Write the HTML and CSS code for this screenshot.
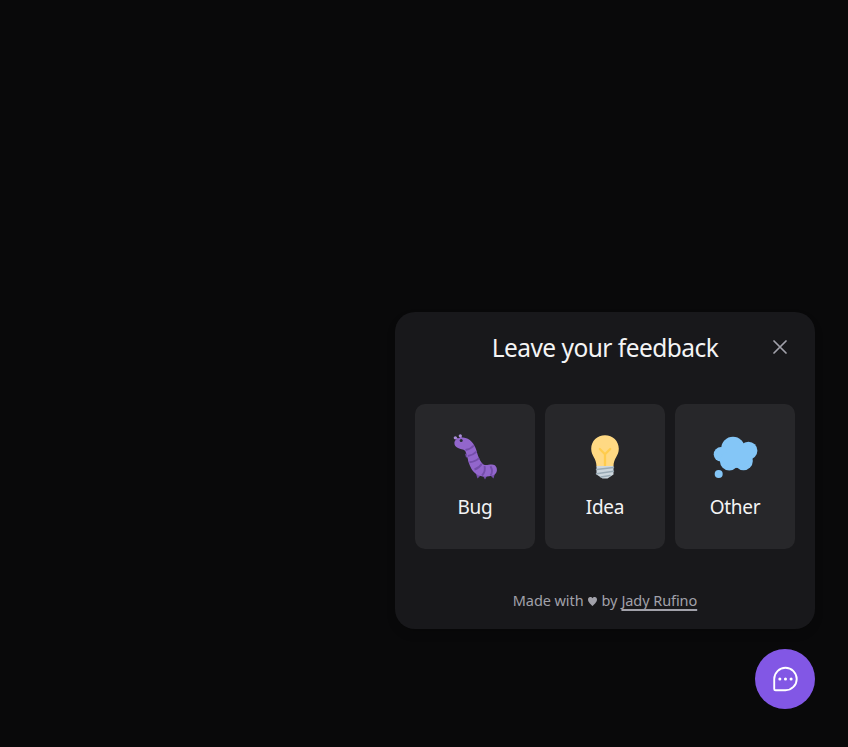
FILE: index.html
```
<!DOCTYPE html>
<html lang="en">
<head>
<meta charset="utf-8">
<title>Feedback</title>
<link rel="stylesheet" href="styles.css">
</head>
<body>
<div class="widget">
  <section class="panel">
    <header class="panel-header">
      <h1 class="title">Leave your feedback</h1>
      <button class="close" aria-label="Close">
        <svg width="14" height="14" viewBox="0 0 14 14" fill="none" stroke="currentColor" stroke-width="1.7" stroke-linecap="round"><path d="M1 1l12 12M13 1L1 13"/></svg>
      </button>
    </header>
    <div class="options">
      <button class="option">
        <svg class="icon" viewBox="0 0 60 60">
          <g fill="#744eaa"><path d="M20 28.500l1 4 4-1zM23 34.500l1 4 4-2zM31 49l1.500 4.500 3-3zM37.500 50l2.500 4.500 2.500-4.500zM45 50l3.500 3.500 1.500-5z"/></g>
          <path d="M10.500 12.500l4 3M15 10l1.500 4" stroke="#9266cc" stroke-width="1.500"/>
          <path d="M9.400 17.500C9.800 14 14 12.200 18 12.400C25 12.700 29.500 19 31.300 25C33 31.500 35.500 37.500 38.500 39.500C41 40.800 43 39.500 47 39.500C50.500 39.500 52.200 42.500 51.900 45.500C51.500 49.200 48 51 42 51.500C35 52.200 30 49.500 26.500 44C23.500 39 22.700 32 20.500 26.500C19.500 24 16.500 24.700 13 23C10.500 21.800 9.100 20 9.400 17.500Z" fill="#9266cc"/>
          <path d="M20.500 25Q26 24 28.800 20.500M22.800 31Q28.500 30 31.500 26.500M24.500 37.300Q31 36.500 34 33M29.500 44.500Q34.500 43 36.800 38.800M37 50.500Q41 46 39.500 41M45.500 50.500Q48.500 46.500 45.500 41.200" fill="none" stroke="#744eaa" stroke-width="1.900"/>
          <circle cx="10.300" cy="12.800" r="1.600" fill="#aa8dd8"/><circle cx="15.300" cy="10.800" r="1.600" fill="#aa8dd8"/>
          <circle cx="16.200" cy="15.500" r="1.500" fill="#292f33"/>
        </svg>
        <span class="label">Bug</span>
      </button>
      <button class="option">
        <svg class="icon" viewBox="0 0 60 60">
          <path d="M30 10.200C22.300 10.200 16.200 16 16.200 23.700C16.200 31 21.500 33 21.500 41.500H38.500C38.500 33 43.800 31 43.800 23.700C43.800 16 37.700 10.200 30 10.200Z" fill="#ffd983"/>
          <path d="M24.800 24l5.200 5.200 5.200-5.200M30 29v12.500" fill="none" stroke="#ffcc4d" stroke-width="2.300" stroke-linecap="round" stroke-linejoin="round"/>
          <path d="M21.500 41h17v8.500L32.500 53.500h-5L21.500 49.500Z" fill="#ccd6dd"/>
          <path d="M21.500 44.500l17-2M21.500 48.700l17-2.500M26 52l9-1.500" fill="none" stroke="#99aab5" stroke-width="1.400" stroke-linecap="round"/>
        </svg>
        <span class="label">Idea</span>
      </button>
      <button class="option">
        <svg class="icon" viewBox="0 0 60 60" fill="#84c6f7">
          <circle cx="28" cy="23.500" r="11.800"/><circle cx="43.400" cy="25.700" r="9"/><circle cx="16" cy="29.300" r="7.300"/><circle cx="24.300" cy="36" r="9.400"/><circle cx="38.500" cy="36" r="9.300"/><path d="M22 22h24v14L31.500 43 22 38z"/><circle cx="13.700" cy="49" r="4"/>
        </svg>
        <span class="label">Other</span>
      </button>
    </div>
    <footer class="footer"><span>Made with</span><svg class="heart" width="9" height="9" viewBox="0 0 9 9"><path d="M4.500 9C3 7.700 0 5 0 2.500C0 .9.900 0 2.200 0C3.300 0 4.100.600 4.500 1.200C4.900.6 5.700 0 6.800 0C8.100 0 9 .9 9 2.500C9 5 6 7.700 4.500 9Z" fill="currentColor"/></svg><span>by</span><a class="author" href="#">Jady Rufino</a></footer>
  </section>
  <button class="launcher" aria-label="Open feedback">
    <svg width="30" height="30" viewBox="0 0 256 256" fill="none" stroke="#fff" stroke-width="16" stroke-linejoin="round"><path d="M132 32a96 96 0 0 0-96 96v84.400a11.600 11.600 0 0 0 11.600 11.600H132a96 96 0 0 0 0-192Z"/><g fill="#fff" stroke="none"><circle cx="84" cy="128" r="13"/><circle cx="132" cy="128" r="13"/><circle cx="180" cy="128" r="13"/></g></svg>
  </button>
</div>
</body>
</html>
```
FILE: styles.css
```
* { box-sizing: border-box; }
body {
  margin: 0;
  min-height: 747px;
  background: #09090a;
  color: #f4f4f5;
  font-family: "Noto Sans", "Open Sans", sans-serif;
  display: flex;
  align-items: flex-end;
  justify-content: flex-end;
  padding: 0 33px 38px 0;
}
button { border: 0; padding: 0; margin: 0; font: inherit; color: inherit; background: none; }
svg { display: block; flex: none; }
.widget { display: flex; flex-direction: column; align-items: flex-end; gap: 20px; }
.panel {
  width: 420px;
  height: 317px;
  padding: 18px 20px 20px;
  border-radius: 20px;
  background: #18181b;
  box-shadow: 0 5px 8px rgba(0, 0, 0, .15);
  display: flex;
  flex-direction: column;
  align-items: center;
}
.panel-header {
  width: 100%;
  height: 35px;
  display: grid;
  grid-template-columns: 30px 1fr 30px;
  align-items: center;
}
.title {
  grid-column: 2;
  justify-self: center;
  margin: 0;
  font-weight: 400;
  font-size: 24.500px;
  line-height: 35px;
  letter-spacing: -.53px;
  white-space: nowrap;
}
.close { color: #a1a1aa; display: flex; justify-content: center; padding-bottom: 2px; }
.options { display: flex; gap: 10px; width: 100%; margin-top: 39px; }
.option {
  flex: 1;
  height: 145px;
  border-radius: 10px;
  background: #27272a;
  display: flex;
  flex-direction: column;
  align-items: center;
  padding-top: 21px;
}
.icon { width: 60px; height: 60px; }
.label { font-size: 19px; line-height: 30px; margin-top: 7px; letter-spacing: -.3px; }
.footer {
  display: flex;
  align-items: baseline;
  margin-top: 39px;
  font-size: 14.500px;
  line-height: 24px;
  color: #a1a1aa;
  letter-spacing: -.08px;
  white-space: nowrap;
}
.heart { margin: 0 5px 0 4px; }
.author { color: inherit; margin-left: 4px; text-decoration: underline; text-decoration-thickness: 1.500px; text-underline-offset: 3px; text-decoration-skip-ink: none; }
.launcher {
  width: 60px;
  height: 60px;
  border-radius: 50%;
  background: #8257e5;
  display: flex;
  align-items: center;
  justify-content: center;
}
```
